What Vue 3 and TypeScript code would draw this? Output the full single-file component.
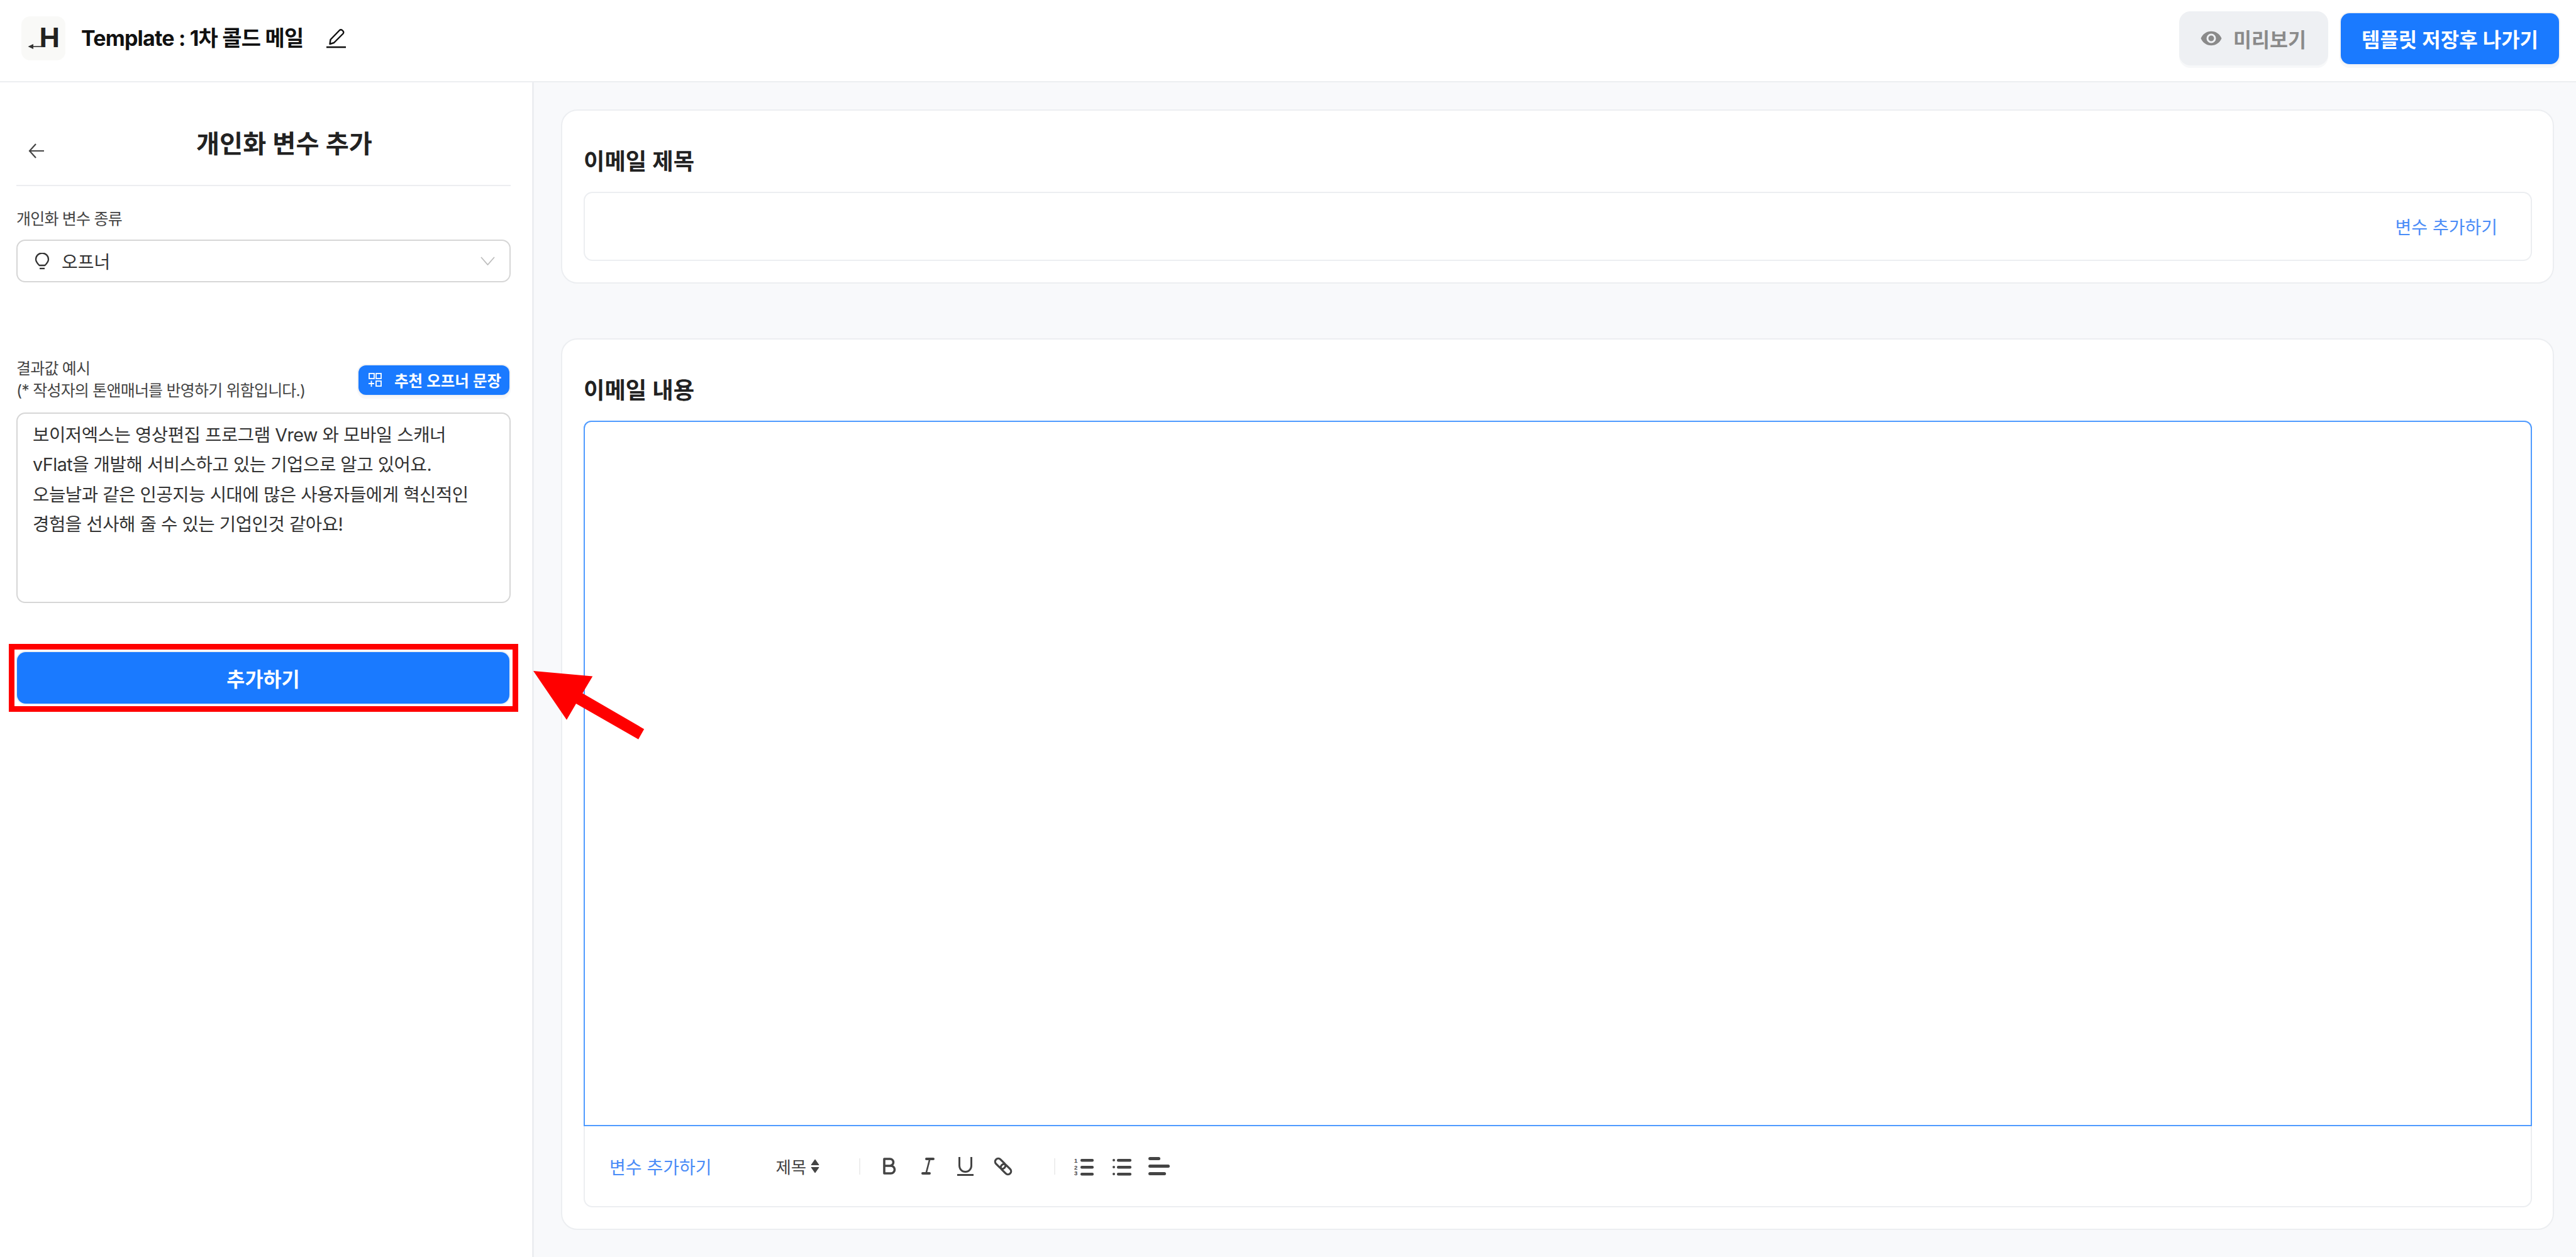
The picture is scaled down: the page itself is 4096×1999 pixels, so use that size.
<script setup lang="ts">
const lines: string[] = [
  '보이저엑스는 영상편집 프로그램 Vrew 와 모바일 스캐너',
  'vFlat을 개발해 서비스하고 있는 기업으로 알고 있어요.',
  '오늘날과 같은 인공지능 시대에 많은 사용자들에게 혁신적인',
  '경험을 선사해 줄 수 있는 기업인것 같아요!',
]
</script>

<template>
  <div class="app">
    <header class="header">
      <svg class="logo" width="70" height="70" viewBox="0 0 70 70">
        <rect width="70" height="70" rx="14" fill="#f9f9f7" />
        <text x="28.5" y="49" class="logo-h">H</text>
        <path d="M19 48H34" stroke="#333" stroke-width="1.6" />
        <path d="M10.5 48L19 44V52Z" fill="#333" />
      </svg>
      <h1 class="title">Template : 1차 콜드 메일</h1>
      <svg class="pencil" width="31" height="31" viewBox="0 0 31 31">
        <path d="M5.5 24L6.5 17L21 2Q23 .5 25 2L26.5 3.5Q28 5.5 26.5 7.5L12 22Z" fill="none" stroke="#111" stroke-width="2.4" stroke-linejoin="round" />
        <path d="M0 29H31" stroke="#111" stroke-width="2.6" />
      </svg>
      <div class="actions">
        <button class="btn-preview">
          <svg width="36" height="36" viewBox="0 0 24 24">
            <path fill="#8a8a8a" d="M12 9a3 3 0 1 0 0 6 3 3 0 0 0 0-6m0 8a5 5 0 1 1 0-10 5 5 0 0 1 0 10m0-12.5C7 4.500 2.730 7.610 1 12c1.730 4.390 6 7.500 11 7.500s9.270-3.110 11-7.500c-1.730-4.390-6-7.500-11-7.500z" />
          </svg>
          <span>미리보기</span>
        </button>
        <button class="btn-save">템플릿 저장후 나가기</button>
      </div>
    </header>

    <div class="body">
      <aside class="side">
        <div class="side-head">
          <svg class="back" width="26" height="24" viewBox="0 0 26 24">
            <path d="M25 12H2M12 1L2 12L12 23" fill="none" stroke="#444" stroke-width="2.2" />
          </svg>
          <h2 class="side-title">개인화 변수 추가</h2>
        </div>

        <label class="label first">개인화 변수 종류</label>
        <div class="select">
          <svg width="24" height="27" viewBox="0 0 24 27">
            <path d="M7.500 20C4.500 17 2 14 2 10.500A10 10 0 0 1 22 10.500C22 14 19.500 17 16.500 20Z" fill="none" stroke="#333" stroke-width="2.300" stroke-linejoin="round" />
            <path d="M8 25H16" stroke="#333" stroke-width="2.300" />
          </svg>
          <span class="select-text">오프너</span>
          <svg class="chev" width="23" height="14" viewBox="0 0 23 14">
            <path d="M1 1L11.500 13L22 1" fill="none" stroke="#bdbdbd" stroke-width="1.800" />
          </svg>
        </div>

        <div class="result-row">
          <div class="label multi">결과값 예시<br />(* 작성자의 톤앤매너를 반영하기 위함입니다.)</div>
          <button class="btn-rec">
            <svg width="22" height="22" viewBox="0 0 22 22">
              <g fill="none" stroke="#fff" stroke-width="1.800">
                <rect x="2" y="1" width="8" height="8" />
                <rect x="13" y="1" width="8" height="8" />
                <rect x="13" y="13" width="8" height="8" />
                <path d="M1 17H10M5.500 12.500V22" />
              </g>
            </svg>
            <span>추천 오프너 문장</span>
          </button>
        </div>

        <div class="sample">
          <div v-for="line in lines" :key="line">{{ line }}</div>
        </div>

        <div class="red-frame">
          <button class="btn-add">추가하기</button>
        </div>
      </aside>

      <main class="main">
        <section class="card">
          <h3 class="card-title">이메일 제목</h3>
          <div class="subject">
            <a class="link">변수 추가하기</a>
          </div>
        </section>

        <section class="card second">
          <h3 class="card-title">이메일 내용</h3>
          <div class="editor"></div>
          <div class="toolbar">
            <a class="link">변수 추가하기</a>
            <span class="heading">제목</span>
            <svg class="caret" width="14" height="21" viewBox="0 0 14 21">
              <path d="M7 0L13 8.500H1ZM7 21L13 12.500H1Z" fill="#444" stroke="#444" stroke-linejoin="round" />
            </svg>
            <i class="sep sep1"></i>
            <svg class="t-b" width="21" height="27" viewBox="0 0 21 27">
              <path d="M2 2H11A5.500 5.500 0 0 1 11 13H2ZM2 13H12.500A6 6 0 0 1 12.500 25H2Z" fill="none" stroke="#444" stroke-width="3.600" stroke-linejoin="round" />
            </svg>
            <svg class="t-i" width="21" height="27" viewBox="0 0 21 27">
              <path d="M8 2H19M2 25H13" stroke="#444" stroke-width="4" stroke-linecap="round" />
              <path d="M13.500 2L7.500 25" stroke="#444" stroke-width="2.600" />
            </svg>
            <svg class="t-u" width="26" height="30" viewBox="0 0 26 30">
              <path d="M3.500 0V14A9.500 9.500 0 0 0 22.500 14V0" fill="none" stroke="#444" stroke-width="3" />
              <rect y="27" width="26" height="3" fill="#444" />
            </svg>
            <svg class="t-l" width="30" height="30" viewBox="0 0 30 30">
              <g fill="none" stroke="#444" stroke-width="3.200">
                <rect x="1" y="5.500" width="19" height="10" rx="5" transform="rotate(45 10.500 10.500)" />
                <rect x="10" y="14.500" width="19" height="10" rx="5" transform="rotate(45 19.500 19.500)" />
              </g>
            </svg>
            <i class="sep sep2"></i>
            <svg class="t-ol" width="31" height="30" viewBox="0 0 31 30">
              <g fill="#444">
                <text x="0" y="9" class="num">1</text>
                <text x="0" y="19.500" class="num">2</text>
                <text x="0" y="29" class="num">3</text>
                <rect x="10" y="3" width="21" height="4.500" rx="2" />
                <rect x="10" y="14" width="21" height="4.500" rx="2" />
                <rect x="10" y="25" width="21" height="4.500" rx="2" />
              </g>
            </svg>
            <svg class="t-ul" width="30" height="30" viewBox="0 0 30 30">
              <g fill="#444">
                <circle cx="2" cy="5" r="2" />
                <circle cx="2" cy="16" r="2" />
                <circle cx="2" cy="27" r="2" />
                <rect x="7" y="3" width="23" height="4.500" rx="2" />
                <rect x="7" y="14" width="23" height="4.500" rx="2" />
                <rect x="7" y="25" width="23" height="4.500" rx="2" />
              </g>
            </svg>
            <svg class="t-a" width="34" height="30" viewBox="0 0 34 30">
              <g fill="#444">
                <rect y="0" width="19" height="5" rx="2.500" />
                <rect y="12" width="34" height="5" rx="2.500" />
                <rect y="24" width="28" height="5" rx="2.500" />
              </g>
            </svg>
          </div>
        </section>
      </main>
    </div>

    <svg class="annot" width="190" height="125" viewBox="0 0 190 125">
      <polygon points="0,0 94.300,8.500 78.200,35.400 176.200,92.400 167.100,108.700 68,52 53,77.700" fill="#ff0000" />
    </svg>
  </div>
</template>

<style scoped>
.app {
  position: relative;
  width: 4096px;
  height: 1999px;
  display: flex;
  flex-direction: column;
  overflow: hidden;
  font-family: Inter, "Noto Sans CJK KR", sans-serif;
  color: #222;
  background: #f8f9fb;
}
button {
  font-family: inherit;
  border: 0;
  cursor: pointer;
}
h1, h2, h3 {
  margin: 0;
}
.header {
  box-sizing: border-box;
  height: 131px;
  flex: none;
  display: flex;
  align-items: center;
  padding: 0 27px 7px 34px;
  background: #fff;
  border-bottom: 2px solid #eceef1;
}
.logo {
  flex: none;
}
.logo-h {
  font-family: "Liberation Sans", sans-serif;
  font-weight: 700;
  font-size: 45px;
  fill: #222220;
}
.title {
  margin-left: 25px;
  font-size: 34px;
  letter-spacing: -0.8px;
  font-weight: 700;
  color: #111;
  line-height: 44px;
  white-space: nowrap;
}
.pencil {
  margin-left: 36px;
}
.actions {
  margin-left: auto;
  display: flex;
  align-items: center;
  gap: 20px;
}
.btn-preview {
  box-sizing: border-box;
  width: 237px;
  height: 86px;
  display: flex;
  align-items: center;
  padding-left: 33px;
  gap: 17px;
  background: #eef0f3;
  border-radius: 18px;
  box-shadow: 0 4px 0 #f7f8f9;
  color: #8a8a8a;
  font-size: 31.500px;
  font-weight: 600;
}
.btn-save {
  width: 347px;
  height: 81px;
  background: #1a7aff;
  border-radius: 14px;
  box-shadow: 0 0 0 2px #f1f2f5, 0 4px 0 2px #f7f8f9;
  color: #fff;
  font-size: 32px;
  font-weight: 600;
  white-space: nowrap;
}
.body {
  flex: 1;
  display: flex;
  min-height: 0;
}
.side {
  box-sizing: border-box;
  width: 849px;
  flex: none;
  padding: 0 34px 0 26px;
  background: #fff;
  border-right: 3px solid #eceef1;
}
.side-head {
  box-sizing: border-box;
  height: 165px;
  display: flex;
  align-items: flex-start;
  border-bottom: 2px solid #ecedf0;
}
.back {
  margin: 97px 0 0 19px;
}
.side-title {
  margin: 73px 0 0 241px;
  font-size: 40.300px;
  line-height: 50px;
  font-weight: 600;
  color: #222;
  white-space: nowrap;
}
.label {
  font-size: 25px;
  letter-spacing: -0.8px;
  color: #444;
  line-height: 35px;
}
.label.first {
  display: block;
  margin-top: 35px;
  margin-bottom: 15px;
}
.select {
  box-sizing: border-box;
  height: 68px;
  display: flex;
  align-items: center;
  padding-left: 27px;
  border: 2px solid #d6d6d6;
  border-radius: 14px;
}
.select-text {
  margin-left: 19px;
  font-size: 28px;
  color: #333;
}
.chev {
  margin-left: auto;
  margin-right: 23px;
}
.result-row {
  margin-top: 119px;
  display: flex;
  justify-content: space-between;
  align-items: flex-start;
}
.label.multi {
  white-space: nowrap;
  padding-top: 1px;
}
.btn-rec {
  box-sizing: border-box;
  width: 240px;
  height: 47px;
  margin: 12.500px 2px 0 0;
  display: flex;
  align-items: center;
  padding-left: 15px;
  gap: 20px;
  background: #1a7aff;
  border-radius: 12px;
  box-shadow: 0 0 0 2px #f0f1f4, 0 4px 0 2px #f8f8fa;
  color: #fff;
  font-size: 24.500px;
  font-weight: 600;
  white-space: nowrap;
}
.sample {
  box-sizing: border-box;
  height: 303px;
  margin-top: 17px;
  padding: 10px 0 0 24px;
  border: 2px solid #d6d6d6;
  border-radius: 14px;
  font-size: 28.700px;
  letter-spacing: -0.5px;
  line-height: 47.400px;
  color: #333;
}
.red-frame {
  box-sizing: border-box;
  width: 810px;
  margin: 65px 0 0 -12px;
  padding: 4px 5px 4px 4px;
  border: 9px solid #ff0000;
  background: #fff;
}
.btn-add {
  display: block;
  width: 100%;
  height: 82px;
  background: #1a7aff;
  border-radius: 14px;
  box-shadow: 0 0 0 2px #eef0f3;
  color: #fff;
  font-size: 31.600px;
  font-weight: 600;
}
.main {
  flex: 1;
  box-sizing: border-box;
  min-width: 0;
  padding: 43px 35px 0 43px;
  display: flex;
  flex-direction: column;
  gap: 87px;
}
.card {
  background: #fff;
  border: 2px solid #eceef1;
  border-radius: 26px;
  padding: 56px 33px 34px 34px;
}
.card-title {
  font-size: 36.300px;
  line-height: 50px;
  font-weight: 600;
  color: #222;
}
.subject {
  box-sizing: border-box;
  height: 110px;
  margin-top: 23px;
  display: flex;
  align-items: center;
  justify-content: flex-end;
  padding-right: 53px;
  border: 2px solid #eceef1;
  border-radius: 14px;
}
.link {
  font-size: 28px;
  color: #4a8cf7;
  white-space: nowrap;
}
.editor {
  box-sizing: border-box;
  height: 1122px;
  margin-top: 23px;
  border: 2px solid #4f9bff;
  border-radius: 12px 12px 0 0;
}
.toolbar {
  box-sizing: border-box;
  height: 129px;
  display: flex;
  align-items: center;
  padding-left: 39px;
  border: 2px solid #eceef1;
  border-top: 0;
  border-radius: 0 0 14px 14px;
}
.heading {
  margin-left: 102px;
  font-size: 26.500px;
  color: #444;
}
.caret {
  margin-left: 7px;
}
.sep {
  display: block;
  width: 2px;
  height: 26px;
  background: #eeeeee;
}
.sep1 {
  margin-left: 63px;
}
.t-b {
  margin-left: 36px;
}
.t-i {
  margin-left: 40px;
}
.t-u {
  margin-left: 36px;
}
.t-l {
  margin-left: 32px;
}
.sep2 {
  margin-left: 66px;
}
.t-ol {
  margin-left: 30px;
}
.t-ul {
  margin-left: 30px;
}
.t-a {
  margin-left: 27px;
}
.num {
  font-family: "Liberation Sans", sans-serif;
  font-size: 9.500px;
  font-weight: 700;
}
.annot {
  position: absolute;
  left: 847.500px;
  top: 1066.600px;
}
</style>

<style>
html, body {
  margin: 0;
  background: #f8f9fb;
}
</style>
